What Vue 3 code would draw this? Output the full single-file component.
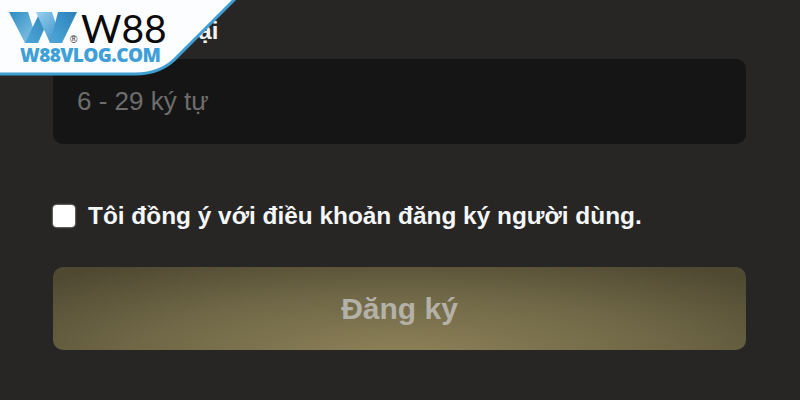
<script setup>
const placeholder = '6 - 29 ký tự'
</script>

<template>
  <div class="page">
    <div class="form">
      <label class="label">Mã số nhập lại</label>
      <div class="field">{{ placeholder }}</div>
      <div class="agree">
        <span class="box"></span>
        <span>Tôi đồng ý với điều khoản đăng ký người dùng.</span>
      </div>
      <div class="submit">Đăng ký</div>
    </div>
    <div class="brand">
      <svg class="shape" width="240" height="80" viewBox="0 0 240 80">
        <path d="M0 0H235L178 56Q162 74 135 74H0Z" fill="#fbfdfe" />
        <path d="M235 -1L178 56Q162 74 135 74H0" fill="none" stroke="#3f9fd2" stroke-width="3" />
      </svg>
      <svg class="mark" width="68" height="31" viewBox="0 0 68 31">
        <defs>
          <linearGradient id="wa" x1="0" y1="0" x2="1" y2="1">
            <stop offset="0" stop-color="#2d8cc3" />
            <stop offset="1" stop-color="#8fcbea" />
          </linearGradient>
          <linearGradient id="wb" x1="0" y1="1" x2="1" y2="0">
            <stop offset="0" stop-color="#4ea6d8" />
            <stop offset="1" stop-color="#2b82ba" />
          </linearGradient>
          <linearGradient id="wc" x1="0" y1="0" x2="1" y2="1">
            <stop offset="0" stop-color="#9ad1ee" />
            <stop offset="1" stop-color="#2f8bc4" />
          </linearGradient>
        </defs>
        <path d="M0 0H19L29 31H16Z" fill="url(#wa)" />
        <path d="M16 31H29L43 0H31Z" fill="url(#wb)" />
        <path d="M27 0H43L53 31H41Z" fill="url(#wc)" />
        <path d="M41 31H53L68 0H49Z" fill="url(#wb)" />
      </svg>
      <span class="reg">®</span>
      <span class="name">W88</span>
      <span class="url">W88VLOG.COM</span>
    </div>
  </div>
</template>

<style scoped>
.page {
  position: relative;
  width: 800px;
  height: 400px;
  overflow: hidden;
  background: #272625;
  font-family: "Liberation Sans", Arial, sans-serif;
}
.form {
  display: flex;
  flex-direction: column;
  padding: 16px 54px 0 53px;
}
.label {
  height: 43px;
  font-size: 24px;
  font-weight: 700;
  line-height: 30px;
  color: #f2f2f2;
}
.field {
  display: flex;
  align-items: center;
  height: 85px;
  padding-left: 24px;
  border-radius: 10px;
  background: #151515;
  color: #6d6d6d;
  font-size: 26px;
}
.agree {
  display: flex;
  align-items: center;
  gap: 13px;
  margin-top: 60px;
  height: 24px;
  color: #f4f6f8;
  font-size: 24.4px;
  font-weight: 700;
}
.box {
  width: 22px;
  height: 22px;
  border-radius: 4px;
  background: #fff;
  box-shadow: 0 0 2px #fff;
}
.submit {
  display: flex;
  align-items: center;
  justify-content: center;
  height: 83px;
  margin-top: 39px;
  border-radius: 10px;
  background: radial-gradient(ellipse 70% 130% at 50% 105%, #8d8158 0%, #6f6746 55%, #4f4932 100%);
  color: #b3b1a8;
  font-size: 30px;
  font-weight: 700;
}
.brand {
  position: absolute;
  top: 0;
  left: 0;
  width: 240px;
  height: 80px;
}
.shape,
.mark,
.reg,
.name,
.url {
  position: absolute;
}
.shape {
  top: 0;
  left: 0;
}
.mark {
  top: 12px;
  left: 9px;
}
.reg {
  top: 34px;
  left: 70px;
  font-size: 10px;
  color: #333;
}
.name {
  top: 5px;
  left: 81px;
  font-family: "Lato", sans-serif;
  font-size: 39px;
  line-height: 46px;
  color: #0b0b0b;
}
.url {
  top: 43px;
  left: 20px;
  font-family: "Open Sans", sans-serif;
  font-size: 19px;
  font-weight: 800;
  line-height: 24px;
  letter-spacing: -0.6px;
  color: #3f9fd8;
}
</style>
